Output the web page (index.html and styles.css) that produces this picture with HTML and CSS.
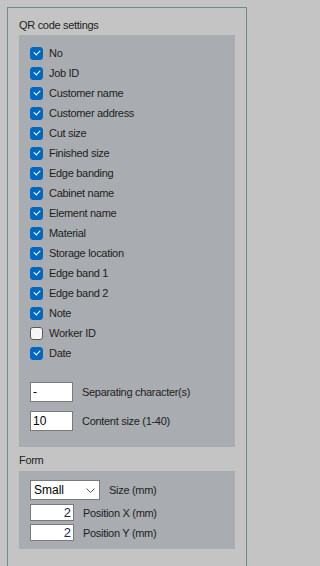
FILE: index.html
```html
<!DOCTYPE html>
<html>
<head>
<meta charset="utf-8">
<link rel="stylesheet" href="styles.css">
</head>
<body>
<div class="frame">
  <div class="group-title">QR code settings</div>
  <div class="panel qr">
    <div class="checks">
      <label class="row"><span class="cb on"></span>No</label>
      <label class="row"><span class="cb on"></span>Job ID</label>
      <label class="row"><span class="cb on"></span>Customer name</label>
      <label class="row"><span class="cb on"></span>Customer address</label>
      <label class="row"><span class="cb on"></span>Cut size</label>
      <label class="row"><span class="cb on"></span>Finished size</label>
      <label class="row"><span class="cb on"></span>Edge banding</label>
      <label class="row"><span class="cb on"></span>Cabinet name</label>
      <label class="row"><span class="cb on"></span>Element name</label>
      <label class="row"><span class="cb on"></span>Material</label>
      <label class="row"><span class="cb on"></span>Storage location</label>
      <label class="row"><span class="cb on"></span>Edge band 1</label>
      <label class="row"><span class="cb on"></span>Edge band 2</label>
      <label class="row"><span class="cb on"></span>Note</label>
      <label class="row"><span class="cb"></span>Worker ID</label>
      <label class="row"><span class="cb on"></span>Date</label>
    </div>
    <div class="fields">
      <div class="field"><span class="tb">-</span><span class="lbl">Separating character(s)</span></div>
      <div class="field"><span class="tb">10</span><span class="lbl">Content size (1-40)</span></div>
    </div>
  </div>
  <div class="group-title form-title">Form</div>
  <div class="panel form">
    <div class="field">
      <span class="select">Small<svg class="chev" width="9" height="5" viewBox="0 0 9 5"><path d="M0.5 0.5 L4.5 4.5 L8.5 0.5" fill="none" stroke="#555" stroke-width="1"/></svg></span>
      <span class="lbl">Size (mm)</span>
    </div>
    <div class="field small"><span class="tb num">2</span><span class="lbl">Position X (mm)</span></div>
    <div class="field small"><span class="tb num">2</span><span class="lbl">Position Y (mm)</span></div>
  </div>
</div>
</body>
</html>
```
FILE: styles.css
```css
html, body {
  margin: 0;
  padding: 0;
  background: #c4c4c4;
  height: 100%;
  overflow: hidden;
}
body {
  font-family: "Liberation Sans", Arial, sans-serif;
  font-size: 11px;
  letter-spacing: -0.3px;
  color: #1e1e1e;
}
.frame {
  margin: 7px 0 0 7px;
  height: calc(100vh - 8px);
  border: 1px solid #6d8a8e;
  border-bottom: none;
  padding: 0 11px;
  box-sizing: content-box;
  width: 216px;
}
.group-title {
  padding-top: 9px;
  line-height: 16px;
  height: 16px;
  margin-bottom: 2px;
  font-size: 11px;
  color: #222;
}
.form-title {
  padding-top: 5px;
  margin-bottom: 3px;
}
.panel {
  background: #a9acb0;
  padding: 8px 11px;
}
.qr {
  padding-bottom: 16px;
}
.checks {
  display: flex;
  flex-direction: column;
}
.row {
  display: flex;
  align-items: center;
  height: 20px;
  gap: 6px;
  white-space: nowrap;
}
.cb {
  width: 13px;
  height: 13px;
  box-sizing: border-box;
  border-radius: 3px;
  background: #f6f6f6;
  border: 1px solid #5a5a5a;
  flex: none;
  position: relative;
}
.cb.on {
  background: #0067c0;
  border-color: #0067c0;
}
.cb.on::after {
  content: "";
  position: absolute;
  left: 3px;
  top: 2px;
  width: 5px;
  height: 3px;
  border-left: 1.2px solid #fff;
  border-bottom: 1.2px solid #fff;
  transform: rotate(-45deg);
}
.fields {
  margin-top: 19px;
  display: flex;
  flex-direction: column;
  gap: 9px;
}
.field {
  display: flex;
  align-items: center;
  gap: 9px;
  white-space: nowrap;
}
.tb {
  width: 43px;
  height: 20px;
  box-sizing: border-box;
  background: #fff;
  border: 1px solid #7a7a7a;
  padding: 0 2px;
  line-height: 18px;
  font-size: 12px;
  letter-spacing: 0;
  color: #000;
}
.form {
  padding-top: 9px;
  padding-bottom: 8px;
}
.form .field + .field {
  margin-top: 4px;
}
.form .field.small + .field.small {
  margin-top: 3px;
}
.field.small .tb {
  width: 44px;
  height: 17px;
  line-height: 15px;
  text-align: right;
  color: #1b2a4a;
  font-size: 13px;
}
.select {
  width: 70px;
  height: 20px;
  box-sizing: border-box;
  background: #fff;
  border: 1px solid #7a7a7a;
  padding: 0 3px;
  line-height: 18px;
  font-size: 12px;
  letter-spacing: 0;
  color: #000;
  display: flex;
  align-items: center;
  justify-content: space-between;
}
.chev {
  margin-right: 1px;
}
```
